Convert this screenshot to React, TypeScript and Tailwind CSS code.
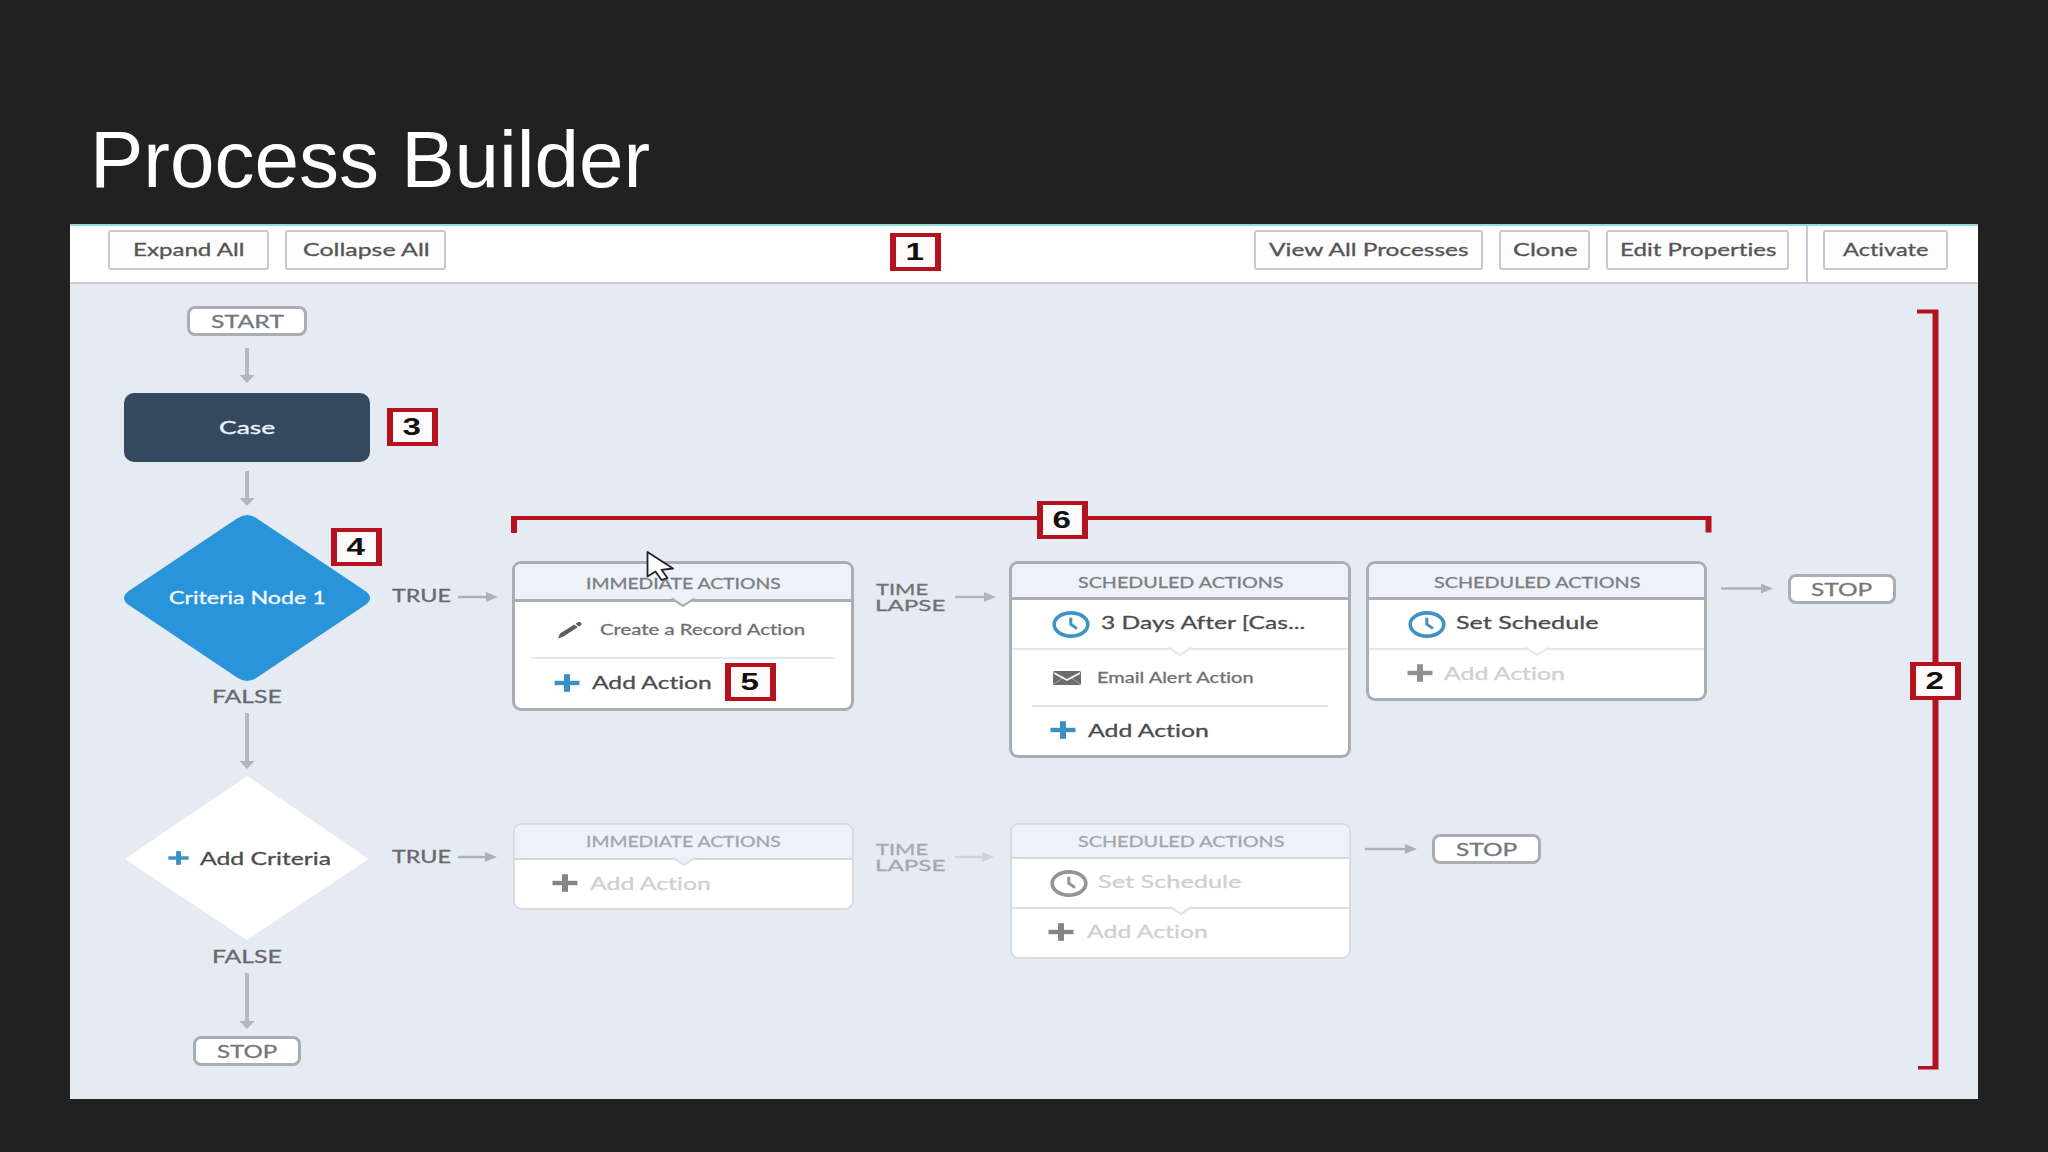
import { useLayoutEffect, useRef, useState } from "react";
import type { ReactNode } from "react";
import clsx from "clsx";

/** Single line of text stretched horizontally to fill the width of its box. */
function Fit({ children, className }: { children: ReactNode; className: string }) {
  const box = useRef<HTMLSpanElement>(null);
  const text = useRef<HTMLSpanElement>(null);
  const [scale, setScale] = useState(1);
  useLayoutEffect(() => {
    if (box.current && text.current) {
      setScale(box.current.offsetWidth / text.current.offsetWidth);
    }
  }, []);
  return (
    <span
      ref={box}
      className={clsx(
        "block shrink-0 text-left leading-none whitespace-nowrap [font-variant-ligatures:none] [-webkit-text-stroke:0.3px_currentColor]",
        className,
      )}
    >
      <span ref={text} className="inline-block origin-left" style={{ transform: `scaleX(${scale})` }}>
        {children}
      </span>
    </span>
  );
}

function ToolButton({ label, className, textClass }: { label: string; className: string; textClass: string }) {
  return (
    <button
      className={clsx(
        "flex h-10 shrink-0 items-center justify-center rounded-[3px] border-2 border-[#c9c9cb] bg-[#fdfdfd] pb-px text-[17px] text-[#555]",
        className,
      )}
    >
      <Fit className={textClass}>{label}</Fit>
    </button>
  );
}

function Badge({ n, className }: { n: string; className: string }) {
  return (
    <div
      className={clsx(
        "flex h-[38px] w-[51px] items-center justify-center border-x-[6px] border-y-[4px] border-[#b5121f] bg-[#fffafa] font-['Liberation_Sans',sans-serif] text-2xl leading-none font-bold text-[#111]",
        className,
      )}
    >
      <span className="-translate-x-px scale-x-[1.38]">{n}</span>
    </div>
  );
}

function Terminal({ label, className, textClass }: { label: string; className: string; textClass: string }) {
  return (
    <div
      className={clsx(
        "absolute flex h-[30px] items-center justify-center rounded-[8px] border-[3px] border-[#a9adb5] bg-white text-[17px] text-[#76777b]",
        className,
      )}
    >
      <Fit className={textClass}>{label}</Fit>
    </div>
  );
}

function Plus({ className = "h-[18px] w-[26px]" }: { className?: string }) {
  return (
    <svg viewBox="0 0 26 18" preserveAspectRatio="none" className={clsx("shrink-0", className)}>
      <path d="M0.5 9H25.5" stroke="currentColor" strokeWidth="4.4" fill="none" />
      <path d="M13 0.2V17.8" stroke="currentColor" strokeWidth="6" fill="none" />
    </svg>
  );
}

function Clock({ className }: { className: string }) {
  return (
    <svg viewBox="0 0 38 27" className={clsx("h-[27px] w-[38px] shrink-0", className)}>
      <ellipse cx="19" cy="13.5" rx="16.8" ry="11.6" fill="none" stroke="currentColor" strokeWidth="3.6" />
      <path d="M18.8 6.8V13.2L25 17.6" fill="none" stroke="currentColor" strokeWidth="3" />
    </svg>
  );
}

function Pencil() {
  return (
    <svg viewBox="0 0 26 18" className="h-[18px] w-[26px] shrink-0">
      <path d="M1 17.5L3 12.6L17.2 3.6L20.8 6.2L6.4 15.4Z" fill="#5d5d5d" />
      <path d="M18.5 2.8L21 1.2Q22.6 0.4 24 1.6T24 4.2L22 5.4Z" fill="#5d5d5d" />
    </svg>
  );
}

function Mail() {
  return (
    <svg viewBox="0 0 28 14" className="h-[14px] w-[28px] shrink-0">
      <rect width="28" height="14" rx="1.5" fill="#6c6c6c" />
      <path d="M1 2L14 9L27 2" fill="none" stroke="#fff" strokeWidth="1.6" />
      <path d="M1 13L9 7.4M27 13L19 7.4" fill="none" stroke="#b5b5b5" strokeWidth="0.8" />
    </svg>
  );
}

/** Small downward pointer hanging from a horizontal divider. */
function Notch({ fill, stroke }: { fill: string; stroke: string }) {
  return (
    <svg viewBox="0 0 26 12" className="absolute -bottom-[10px] left-1/2 h-3 w-[26px] -translate-x-1/2">
      <path d="M0 0H26V1.2L24 1.6L13 9L2 1.6L0 1.2Z" fill={fill} />
      <path d="M1.5 1.5L13 9L24.5 1.5" fill="none" stroke={stroke} strokeWidth="2.2" />
    </svg>
  );
}

function Card({
  title,
  titleClass,
  headClass,
  faded,
  notch,
  className,
  children,
}: {
  title: string;
  titleClass: string;
  headClass: string;
  faded?: boolean;
  notch?: boolean;
  className: string;
  children: ReactNode;
}) {
  return (
    <section
      className={clsx(
        "absolute flex flex-col rounded-[9px] bg-white",
        faded ? "border-2 border-[#d5dbe0]" : "border-[3px] border-[#a9adb5]",
        className,
      )}
    >
      <header
        className={clsx(
          "relative flex shrink-0 items-center justify-center rounded-t-[6px] bg-[#eef2f8] text-[15px]",
          faded ? "border-b-2 border-[#d3d8dd] text-[#a3a6ab]" : "border-b-[3px] border-[#a9adb5] pt-[3px] text-[#7b7d82]",
          headClass,
        )}
      >
        <Fit className={titleClass}>{title}</Fit>
        {notch && <Notch fill="#eef2f8" stroke={faded ? "#dde2e8" : "#a9adb5"} />}
      </header>
      {children}
    </section>
  );
}

function DownArrow({ y1, y2 }: { y1: number; y2: number }) {
  return (
    <g>
      <path d={`M247 ${y1}V${y2 - 6}`} stroke="#b3b8c4" strokeWidth="4" />
      <path d={`M239.5 ${y2 - 8}H254.5L247 ${y2}Z`} fill="#b0b5c0" />
    </g>
  );
}

function RightArrow({ x1, x2, y, color }: { x1: number; x2: number; y: number; color: string }) {
  return (
    <g stroke="none" fill={color}>
      <rect x={x1} y={y - 1.2} width={x2 - x1 - 8} height="2.4" />
      <path d={`M${x2 - 12} ${y - 5}L${x2} ${y}L${x2 - 12} ${y + 5}Z`} />
    </g>
  );
}

function Connectors() {
  return (
    <svg viewBox="0 0 2048 1152" className="absolute inset-0 h-[1152px] w-[2048px]">
      <DownArrow y1={348} y2={383} />
      <DownArrow y1={471} y2={506} />
      <DownArrow y1={713} y2={769} />
      <DownArrow y1={973} y2={1029} />
      <path
        d="M237 518.5Q247 511.5 257 518.5L366 591.5Q374 598 366 604.5L257 677.5Q247 684.5 237 677.5L128 604.5Q120 598 128 591.5Z"
        fill="#2a94da"
      />
      <path d="M247 776L369 859L247 940L125 859Z" fill="#fff" />
      <RightArrow x1={458} x2={498} y={597} color="#acb0ba" />
      <RightArrow x1={458} x2={497} y={857} color="#acb0ba" />
      <RightArrow x1={955} x2={996} y={597} color="#b0b4be" />
      <RightArrow x1={955} x2={994} y={857} color="#ccd2dc" />
      <RightArrow x1={1721} x2={1773} y={588.5} color="#acb0ba" />
      <RightArrow x1={1365} x2={1417} y={849} color="#acb0ba" />
    </svg>
  );
}

function Brackets() {
  return (
    <svg viewBox="0 0 2048 1152" className="absolute inset-0 h-[1152px] w-[2048px]">
      <path d="M511 516H1711.5V532.5H1705.5V520H517V533H511Z" fill="#b5121f" />
      <path d="M1917 309.5H1938.5V1069.5H1918V1066H1932.5V313.5H1917Z" fill="#b5121f" />
    </svg>
  );
}

function Pointer() {
  return (
    <svg viewBox="0 0 30 32" className="absolute top-[550px] left-[646px] h-8 w-[30px]">
      <path
        d="M1.5 2L1.5 26.5L9.5 21.5L15.5 30L21.5 28L15.5 19.8L27 18.5Z"
        fill="#fff"
        stroke="#222"
        strokeWidth="1.8"
        strokeLinejoin="round"
      />
    </svg>
  );
}

export default function App() {
  return (
    <div className="relative flex h-[1152px] w-[2048px] flex-col overflow-hidden bg-[#212121] font-['Lato',sans-serif]">
      <h1 className="h-[224px] pt-[115px] pl-[90px] font-['Liberation_Sans',sans-serif] text-[80px] leading-[90px] whitespace-nowrap text-white">
        Process Builder
      </h1>

      <main className="ml-[70px] flex h-[875px] w-[1908px] flex-col bg-[#e4ebf3]">
        <nav className="flex h-[60px] shrink-0 items-start border-t-2 border-b-2 border-t-[#8fdce0] border-b-[#c9ccd4] bg-white pr-[30px] pl-[38px]">
          <ToolButton label="Expand All" className="mt-1 w-[161px]" textClass="w-[112px]" />
          <ToolButton label="Collapse All" className="mt-1 ml-4 w-[161px]" textClass="w-[126px]" />
          <Badge n="1" className="mt-[7px] ml-[444px]" />
          <div className="ml-auto flex h-full items-start">
            <ToolButton label="View All Processes" className="mt-1 w-[229px]" textClass="w-[200px]" />
            <ToolButton label="Clone" className="mt-1 ml-4 w-[91px]" textClass="w-[64px]" />
            <ToolButton label="Edit Properties" className="mt-1 ml-4 w-[183px]" textClass="w-[156px]" />
            <div className="ml-[17px] h-full w-0.5 bg-[#c9ccd4]" />
            <ToolButton label="Activate" className="mt-1 ml-[15px] w-[125px]" textClass="w-[86px]" />
          </div>
        </nav>
      </main>

      <div className="absolute inset-0">
        <Connectors />

        <Terminal label="START" className="top-[306px] left-[187px] w-[120px]" textClass="w-[73px]" />
        <div className="absolute top-[393px] left-[124px] flex h-[69px] w-[246px] items-center justify-center rounded-[10px] bg-[#34495e] text-[17px] text-[#eef4fa]">
          <Fit className="w-[56px]">Case</Fit>
        </div>
        <Fit className="absolute top-[589px] left-[169px] w-[157px] text-[17px] text-[#f2f9ff]">Criteria Node 1</Fit>
        <Fit className="absolute top-[587px] left-[392px] w-[59px] text-[17px] text-[#66686d]">TRUE</Fit>
        <Fit className="absolute top-[688px] left-[212px] w-[70px] text-[17px] text-[#66686d]">FALSE</Fit>
        <div className="absolute top-[849px] left-[168px] flex h-[18px] items-center gap-[11px] text-[17px] text-[#4c4c4e]">
          <Plus className="h-[14px] w-[21px] text-[#3a8fc4]" />
          <Fit className="w-[131px]">Add Criteria</Fit>
        </div>
        <Fit className="absolute top-[848px] left-[392px] w-[59px] text-[17px] text-[#66686d]">TRUE</Fit>
        <Fit className="absolute top-[948px] left-[212px] w-[70px] text-[17px] text-[#66686d]">FALSE</Fit>
        <Terminal label="STOP" className="top-[1036px] left-[193px] w-[108px]" textClass="w-[61px]" />

        <Card
          title="IMMEDIATE ACTIONS"
          titleClass="w-[195px]"
          headClass="h-[38px]"
          notch
          className="top-[561px] left-[512px] h-[150px] w-[342px]"
        >
          <div className="mx-4 flex h-[57px] items-center gap-[17px] border-b-2 border-[#e3e5e9] pl-[26px] text-[15px] text-[#707072]">
            <Pencil />
            <Fit className="w-[205px]">Create a Record Action</Fit>
          </div>
          <div className="flex h-[47px] items-center gap-3 pl-[39px] text-[17px] text-[#4c4c4e]">
            <Plus className="h-[18px] w-[26px] text-[#3a8fc4]" />
            <Fit className="w-[120px]">Add Action</Fit>
          </div>
        </Card>
        <Fit className="absolute top-[581px] left-[876px] w-[52px] text-[16px] text-[#707277]">TIME</Fit>
        <Fit className="absolute top-[597px] left-[875px] w-[71px] text-[16px] text-[#707277]">LAPSE</Fit>

        <Card
          title="SCHEDULED ACTIONS"
          titleClass="w-[205px]"
          headClass="h-[36px]"
          className="top-[561px] left-[1009px] h-[197px] w-[342px]"
        >
          <div className="relative flex h-[50px] items-center gap-[11px] border-b-2 border-[#e3e6ea] pl-[40px] text-[17px] text-[#4c4c4e]">
            <Clock className="text-[#3f92c6]" />
            <Fit className="w-[204px] pb-[3px]">3 Days After [Cas...</Fit>
            <Notch fill="#fff" stroke="#e6e9ed" />
          </div>
          <div className="mx-5 flex h-[57px] items-center gap-4 border-b-2 border-[#e0e2e8] pl-[21px] text-[15px] text-[#707072]">
            <Mail />
            <Fit className="w-[156px] pb-px">Email Alert Action</Fit>
          </div>
          <div className="flex h-[46px] items-center gap-3 pl-[38px] text-[17px] text-[#4c4c4e]">
            <Plus className="h-[18px] w-[26px] text-[#3a8fc4]" />
            <Fit className="w-[121px]">Add Action</Fit>
          </div>
        </Card>

        <Card
          title="SCHEDULED ACTIONS"
          titleClass="w-[206px]"
          headClass="h-[36px]"
          className="top-[561px] left-[1366px] h-[140px] w-[341px]"
        >
          <div className="relative flex h-[50px] items-center gap-[10px] border-b-2 border-[#e3e6ea] pl-[39px] text-[17px] text-[#4c4c4e]">
            <Clock className="text-[#3f92c6]" />
            <Fit className="w-[142px] pb-[3px]">Set Schedule</Fit>
            <Notch fill="#fff" stroke="#e6e9ed" />
          </div>
          <div className="flex h-[46px] items-center gap-[11px] pl-[38px] text-[17px] text-[#cfcfd1]">
            <Plus className="h-[18px] w-[26px] text-[#909092]" />
            <Fit className="w-[121px]">Add Action</Fit>
          </div>
        </Card>
        <Terminal label="STOP" className="top-[574px] left-[1788px] w-[108px]" textClass="w-[62px]" />

        <Card
          title="IMMEDIATE ACTIONS"
          titleClass="w-[195px]"
          headClass="h-[35px]"
          faded
          notch
          className="top-[823px] left-[513px] h-[87px] w-[341px]"
        >
          <div className="flex h-[46px] items-center gap-3 pl-[37px] text-[17px] text-[#cfcfd1]">
            <Plus className="h-[18px] w-[26px] text-[#858587]" />
            <Fit className="w-[121px]">Add Action</Fit>
          </div>
        </Card>
        <Fit className="absolute top-[841px] left-[876px] w-[52px] text-[16px] text-[#a4a8b0]">TIME</Fit>
        <Fit className="absolute top-[857px] left-[875px] w-[71px] text-[16px] text-[#a4a8b0]">LAPSE</Fit>

        <Card
          title="SCHEDULED ACTIONS"
          titleClass="w-[206px]"
          headClass="h-[34px]"
          faded
          className="top-[823px] left-[1010px] h-[136px] w-[341px]"
        >
          <div className="relative flex h-[50px] items-center gap-[10px] border-b-2 border-[#dcdee0] pl-[38px] text-[17px] text-[#cfcfd1]">
            <Clock className="text-[#949496]" />
            <Fit className="w-[143px] pb-[3px]">Set Schedule</Fit>
            <Notch fill="#fff" stroke="#e0e2e4" />
          </div>
          <div className="flex h-[45px] items-center gap-[13px] pl-[36px] text-[17px] text-[#cfcfd1]">
            <Plus className="h-[18px] w-[26px] text-[#858587]" />
            <Fit className="w-[121px]">Add Action</Fit>
          </div>
        </Card>
        <Terminal label="STOP" className="top-[834px] left-[1432px] w-[109px]" textClass="w-[62px]" />

        <Brackets />
        <Badge n="3" className="absolute top-[408px] left-[387px]" />
        <Badge n="4" className="absolute top-[528px] left-[331px]" />
        <Badge n="5" className="absolute top-[663px] left-[725px]" />
        <Badge n="6" className="absolute top-[501px] left-[1037px]" />
        <Badge n="2" className="absolute top-[662px] left-[1910px]" />
        <Pointer />
      </div>
    </div>
  );
}
